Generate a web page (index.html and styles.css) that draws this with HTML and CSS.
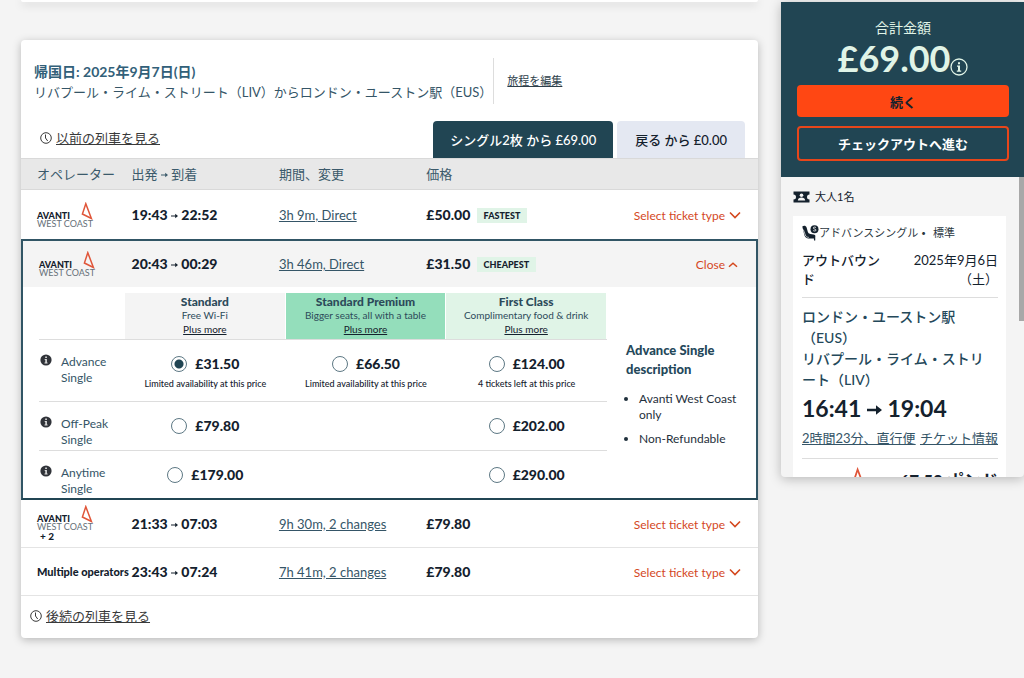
FILE: index.html
```html
<!DOCTYPE html>
<html lang="ja">
<head>
  <meta charset="UTF-8">
  <meta name="viewport" content="width=device-width, initial-scale=1.0">
  <title>列車を選択</title>
  <link rel="stylesheet" href="styles.css">
</head>
<body>

  <!-- shared icons -->
  <svg class="sprite" aria-hidden="true">
    <symbol id="arrow" viewBox="0 0 10 8">
      <path d="M0 3.2h6V.8L10 4 6 7.2V4.8H0z" fill="currentColor"/>
    </symbol>
    <symbol id="clock" viewBox="0 0 12 12">
      <circle cx="6" cy="6" r="5.3" fill="none" stroke="currentColor"/>
      <path d="M5.5 2.5V6l2.2 3" fill="none" stroke="currentColor"/>
    </symbol>
    <symbol id="chevron" viewBox="0 0 12 8">
      <path d="M1 1.5l5 5 5-5" fill="none" stroke="currentColor" stroke-width="1.6"/>
    </symbol>
    <symbol id="chevron-up" viewBox="0 0 12 8">
      <path d="M2 5.8l4-3.6 4 3.6" fill="none" stroke="currentColor" stroke-width="1.5"/>
    </symbol>
    <symbol id="info" viewBox="0 0 12 12">
      <circle cx="6" cy="6" r="5.6" fill="#303339"/>
      <path d="M5.2 2.5h1.7v1.6H5.2zM4.7 5h2.2v3.4h.7v1H4.5v-1h.8V6h-.6z" fill="#ddd"/>
    </symbol>
    <symbol id="avanti" viewBox="0 0 12 18">
      <path d="M4.8 1.700L1.400 12l9 4.500z" fill="none" stroke="#e0563a" stroke-width="1.500"/>
    </symbol>
  </svg>

  <div class="page">
    <main class="results">
      <section class="card card-previous"></section>

      <section class="card">
        <header class="journey">
          <div class="journey-text">
            <h2>帰国日: 2025年9月7日(日)</h2>
            <p>リバプール・ライム・ストリート（LIV）からロンドン・ユーストン駅（EUS）</p>
          </div>
          <a class="edit-link" href="#">旅程を編集</a>
        </header>

        <div class="toolbar">
          <a class="time-link" href="#"><svg class="clock"><use href="#clock"/></svg><span>以前の列車を見る</span></a>
          <div class="tabs">
            <button class="tab tab-active" type="button">シングル2枚 から £69.00</button>
            <button class="tab" type="button">戻る から £0.00</button>
          </div>
        </div>

        <table class="trains">
          <colgroup>
            <col class="col-operator">
            <col class="col-time">
            <col class="col-duration">
            <col class="col-price">
            <col class="col-action">
          </colgroup>
          <thead>
            <tr>
              <th>オペレーター</th>
              <th>出発 <svg class="arrow"><use href="#arrow"/></svg> 到着</th>
              <th>期間、変更</th>
              <th>価格</th>
              <th></th>
            </tr>
          </thead>
          <tbody class="fastest">
            <tr>
              <td>
                <div class="operator"><span class="operator-name">AVANTI</span><svg class="operator-mark"><use href="#avanti"/></svg><span class="operator-sub">WEST COAST</span></div>
              </td>
              <td class="time">19:43 <svg class="arrow"><use href="#arrow"/></svg> 22:52</td>
              <td><a class="duration" href="#">3h 9m, Direct</a></td>
              <td class="price">£50.00 <span class="badge">FASTEST</span></td>
              <td class="action"><button class="toggle" type="button">Select ticket type<svg class="chevron"><use href="#chevron"/></svg></button></td>
            </tr>
          </tbody>
          <tbody class="expanded">
            <tr class="expanded-head">
              <td>
                <div class="operator"><span class="operator-name">AVANTI</span><svg class="operator-mark"><use href="#avanti"/></svg><span class="operator-sub">WEST COAST</span></div>
              </td>
              <td class="time">20:43 <svg class="arrow"><use href="#arrow"/></svg> 00:29</td>
              <td><a class="duration" href="#">3h 46m, Direct</a></td>
              <td class="price">£31.50 <span class="badge">CHEAPEST</span></td>
              <td class="action"><button class="toggle" type="button">Close<svg class="chevron chevron-small"><use href="#chevron-up"/></svg></button></td>
            </tr>
            <tr class="expanded-body">
              <td colspan="5">
                <div class="fare-panel">
                  <table class="fares">
                    <colgroup>
                      <col class="col-ticket">
                      <col>
                      <col>
                      <col>
                    </colgroup>
                    <thead>
                      <tr>
                        <td></td>
                        <th><div class="class-box">
                          <strong>Standard</strong>
                          <span>Free Wi-Fi</span>
                          <a href="#">Plus more</a>
                        </div></th>
                        <th><div class="class-box class-premium">
                          <strong>Standard Premium</strong>
                          <span>Bigger seats, all with a table</span>
                          <a href="#">Plus more</a>
                        </div></th>
                        <th><div class="class-box class-first">
                          <strong>First Class</strong>
                          <span>Complimentary food &amp; drink</span>
                          <a href="#">Plus more</a>
                        </div></th>
                      </tr>
                    </thead>
                    <tbody>
                      <tr class="fare-tall">
                        <th><div class="ticket"><svg class="info"><use href="#info"/></svg><span>Advance Single</span></div></th>
                        <td>
                          <label class="fare"><input type="radio" name="fare" checked>£31.50</label>
                          <small>Limited availability at this price</small>
                        </td>
                        <td>
                          <label class="fare"><input type="radio" name="fare">£66.50</label>
                          <small>Limited availability at this price</small>
                        </td>
                        <td>
                          <label class="fare"><input type="radio" name="fare">£124.00</label>
                          <small>4 tickets left at this price</small>
                        </td>
                      </tr>
                      <tr>
                        <th><div class="ticket"><svg class="info"><use href="#info"/></svg><span>Off-Peak Single</span></div></th>
                        <td><label class="fare"><input type="radio" name="fare">£79.80</label></td>
                        <td></td>
                        <td><label class="fare"><input type="radio" name="fare">£202.00</label></td>
                      </tr>
                      <tr>
                        <th><div class="ticket"><svg class="info"><use href="#info"/></svg><span>Anytime Single</span></div></th>
                        <td><label class="fare"><input type="radio" name="fare">£179.00</label></td>
                        <td></td>
                        <td><label class="fare"><input type="radio" name="fare">£290.00</label></td>
                      </tr>
                    </tbody>
                  </table>
                  <aside class="description">
                    <h3>Advance Single description</h3>
                    <ul>
                      <li>Avanti West Coast only</li>
                      <li>Non-Refundable</li>
                    </ul>
                  </aside>
                </div>
              </td>
            </tr>
          </tbody>
          <tbody>
            <tr>
              <td>
                <div class="operator"><span class="operator-name">AVANTI</span><svg class="operator-mark"><use href="#avanti"/></svg><span class="operator-sub">WEST COAST</span><span class="operator-more">+ 2</span></div>
              </td>
              <td class="time">21:33 <svg class="arrow"><use href="#arrow"/></svg> 07:03</td>
              <td><a class="duration" href="#">9h 30m, 2 changes</a></td>
              <td class="price">£79.80</td>
              <td class="action"><button class="toggle" type="button">Select ticket type<svg class="chevron"><use href="#chevron"/></svg></button></td>
            </tr>
            <tr>
              <td class="multiple">Multiple operators</td>
              <td class="time">23:43 <svg class="arrow"><use href="#arrow"/></svg> 07:24</td>
              <td><a class="duration" href="#">7h 41m, 2 changes</a></td>
              <td class="price">£79.80</td>
              <td class="action"><button class="toggle" type="button">Select ticket type<svg class="chevron"><use href="#chevron"/></svg></button></td>
            </tr>
          </tbody>
        </table>

        <footer class="later">
          <a class="time-link" href="#"><svg class="clock"><use href="#clock"/></svg><span>後続の列車を見る</span></a>
        </footer>
      </section>
    </main>

    <aside class="basket">
      <div class="total">
        <p class="total-label">合計金額</p>
        <p class="total-price">£69.00<svg class="total-info" viewBox="0 0 18 18"><circle cx="9" cy="9" r="8" fill="none" stroke="currentColor" stroke-width="1.3"/><path d="M8 4.2h2v2H8zM7 7.500h3v5h1.200v1.200H6.800v-1.200H8V8.700H7z" fill="currentColor"/></svg></p>
        <button class="btn btn-primary" type="button">続く</button>
        <button class="btn btn-outline" type="button">チェックアウトへ進む</button>
      </div>

      <div class="basket-body">
        <p class="passengers"><svg class="passenger-icon" viewBox="0 0 17 12"><path d="M.5.5h16v3a2.500 2.500 0 0 0 0 5v3H.5v-3a2.500 2.500 0 0 0 0-5z" fill="#14212d"/><circle cx="8.500" cy="4.200" r="1.800" fill="#f4f4f4"/><path d="M4.800 9.500c.3-2.200 1.700-3 3.700-3s3.400.8 3.700 3z" fill="#f4f4f4"/></svg>大人1名</p>

        <div class="ticket-card">
          <p class="fare-name"><svg class="seat-icon" viewBox="0 0 17 16"><path d="M.3 1.500C2 .2 4 .8 4.600 2.500l1.200 4.300c.4 1.300 1 1.900 2.400 2.100l3.300.5c1.500.2 2 1 1.600 2.200L12 13.500H7.500C4 13.500 3 12 2.200 9.500z" fill="#14212d"/><path d="M1.300 4.500l2 5.500c.7 1.800 1.800 2.300 3.500 2.400" fill="none" stroke="#fff" stroke-width=".7"/><path d="M12.600 10.500v5" stroke="#14212d" stroke-width="1.300"/><circle cx="12.500" cy="4.200" r="4" fill="#14212d"/><path d="M14 2.500c-1.300-.8-2.700-.5-2.700.5 0 1.300 2.700.8 2.700 2.100 0 1-1.500 1.200-2.800.5" fill="none" stroke="#fff" stroke-width=".8"/></svg>アドバンスシングル<span class="dot">•</span>標準</p>
          <div class="leg-head">
            <span class="leg-name">アウトバウンド</span>
            <span class="leg-date">2025年9月6日<br>（土）</span>
          </div>
          <p class="stations">ロンドン・ユーストン駅（EUS）<br>リバプール・ライム・ストリート（LIV）</p>
          <p class="leg-time">16:41 <svg class="arrow-large"><use href="#arrow"/></svg> 19:04</p>
          <p class="leg-links"><a href="#">2時間23分、直行便</a><a href="#">チケット情報</a></p>
          <div class="leg-price">
            <svg class="leg-mark"><use href="#avanti"/></svg>
            <strong>67.50 ポンド</strong>
          </div>
        </div>
        <span class="scroll-thumb"></span>
      </div>
    </aside>
  </div>

</body>
</html>
```

FILE: styles.css
```css
* {
  box-sizing: border-box;
}

body {
  margin: 0;
  background-color: #f4f4f4;
  color: #14212d;
  font-family: Lato, "Noto Sans CJK JP", sans-serif;
  font-size: 13px;
  line-height: 20px;
}

h2, h3, p, ul {
  margin: 0;
}

a {
  color: inherit;
}

button {
  font-family: inherit;
  cursor: pointer;
}

.sprite {
  display: none;
}

.page {
  display: flex;
  align-items: flex-start;
  gap: 23px;
  padding: 0 0 40px 21px;
}

.results {
  flex: 1;
  min-width: 0;
}

.card {
  background-color: #fff;
  border-radius: 4px;
  box-shadow: 0 2px 9px rgba(0, 0, 0, 0.25);
}

.card-previous {
  height: 2px;
  margin-bottom: 38px;
  border-radius: 0 0 4px 4px;
}

/* Journey header */
.journey {
  display: flex;
  align-items: center;
  padding: 18px 13px 17px;
}

.journey-text {
  padding: 4px 1px 2px 0;
  border-right: 1px solid #ddd;
  color: #355567;
}

.journey h2 {
  color: #326079;
  font-size: 14px;
  line-height: 20px;
  font-weight: 700;
}

.edit-link {
  margin-left: 13px;
  color: #2c3e4a;
  font-size: 11px;
}

.toolbar {
  display: flex;
  justify-content: space-between;
  align-items: flex-end;
  padding: 0 13px 0 19px;
}

.toolbar .time-link {
  padding-bottom: 10px;
}

.time-link {
  display: inline-flex;
  align-items: center;
  gap: 4px;
  color: #3a3a3a;
  text-decoration: none;
}

.time-link span {
  text-decoration: underline;
}

.clock {
  width: 12px;
  height: 12px;
}

.tabs {
  display: flex;
  gap: 4px;
}

.tab {
  height: 37px;
  padding: 0 18px;
  border: none;
  border-radius: 4px 4px 0 0;
  background-color: #e4e8f2;
  color: #14212d;
  font-size: 13px;
  font-weight: 500;
}

.tab-active {
  padding: 0 17px;
  background-color: #214553;
  color: #fff;
}

/* Train list */
.trains,
.fares {
  width: 100%;
  table-layout: fixed;
  border-spacing: 0;
}

.col-operator {
  width: 15%;
}

.col-time,
.col-duration {
  width: 20%;
}

.col-price {
  width: 18%;
}

.trains td,
.trains th {
  padding: 0;
  text-align: left;
}

.trains > thead th {
  height: 32px;
  border-top: 1px solid #d9d9d9;
  border-bottom: 1px solid #d9d9d9;
  background-color: #e8e8e8;
  color: #3b5a6b;
  font-weight: 400;
}

.trains > thead th:first-child,
.trains > tbody > tr > td:first-child {
  padding-left: 16px;
}

.trains > tbody > tr > td {
  height: 48px;
  border-bottom: 1px solid #e4e4e4;
}

.trains > .fastest > tr > td {
  height: 49px;
  border-bottom: none;
}

.operator {
  display: grid;
  grid-template-columns: 44px 12px;
  align-items: end;
  justify-content: start;
  color: #14212d;
}

.operator-name {
  font-size: 9px;
  line-height: 9px;
  font-weight: 900;
}

.operator-mark {
  width: 12px;
  height: 18px;
}

.operator-sub {
  grid-column: span 2;
  color: #667079;
  font-size: 9px;
  line-height: 8px;
  white-space: nowrap;
}

.operator-more {
  padding-left: 3px;
  font-size: 10px;
  line-height: 11px;
  font-weight: 900;
}

.multiple {
  font-size: 11px;
  font-weight: 900;
  white-space: nowrap;
}

.time,
.price,
.fare {
  font-size: 14px;
  font-weight: 900;
  white-space: nowrap;
}

.arrow {
  width: 7px;
  height: 6px;
  vertical-align: 1px;
}

.duration {
  color: #355567;
}

.badge {
  display: inline-block;
  margin-left: 3px;
  padding: 0 7px;
  background-color: #e0f4e7;
  font-size: 9px;
  line-height: 15px;
  vertical-align: 1px;
}

.trains .action {
  padding-right: 17px;
  text-align: right;
}

.toggle {
  display: inline-flex;
  align-items: center;
  gap: 4px;
  padding: 0;
  border: none;
  background: none;
  color: #d4481e;
  font-size: 12px;
}

.chevron {
  width: 12px;
  height: 8px;
}

.chevron-small {
  margin-left: -2px;
}

/* Opened train */
.trains > .expanded > tr > td {
  border-bottom: none;
}

.trains > .expanded > tr > td:first-child {
  border-left: 2px solid #315565;
}

.trains > .expanded > tr > td:last-child {
  border-right: 2px solid #315565;
}

.trains > .expanded > .expanded-head > td {
  border-top: 2px solid #315565;
  background-color: #f4f4f4;
}

.trains > .expanded > .expanded-body > td {
  padding: 6px 16px 0;
  border-bottom: 2px solid #214553;
}

.fare-panel {
  display: flex;
  gap: 19px;
}

.fares {
  flex: 1;
}

.description {
  flex: 0 0 114px;
  padding-top: 48px;
}

.col-ticket {
  width: 86px;
}

.fares th,
.fares td {
  border-bottom: 1px solid #ddd;
}

.fares tbody tr:last-child > * {
  border-bottom: none;
}

.fares thead th {
  font-weight: 400;
}

.class-box {
  display: flex;
  flex-direction: column;
  height: 46px;
  margin-right: 1px;
  padding-top: 2px;
  background-color: #f4f4f4;
  color: #2c4a5a;
  font-size: 10px;
  line-height: 13px;
  text-align: center;
}

.class-box strong {
  font-size: 12px;
  line-height: 14px;
  font-weight: 900;
}

.class-box a {
  padding-top: 1px;
  color: #14212d;
}

.class-premium {
  background-color: #94debb;
}

.class-first {
  background-color: #e0f4e7;
}

.fares tbody th,
.fares tbody td {
  height: 49px;
  vertical-align: top;
}

.fares .fare-tall > * {
  height: 62px;
}

.fares tbody tr:last-child > * {
  height: 47px;
}

.fares tbody td {
  padding-top: 15px;
  text-align: center;
}

.ticket {
  display: flex;
  align-items: flex-start;
  gap: 9px;
  padding: 14px 12px 0 1px;
  color: #355567;
  font-size: 12px;
  line-height: 16px;
  font-weight: 400;
}

.info {
  flex: none;
  width: 12px;
  height: 12px;
}

.fare {
  display: inline-flex;
  align-items: center;
  gap: 8px;
  line-height: 18px;
}

.fare input {
  appearance: none;
  width: 16px;
  height: 16px;
  margin: 0;
  border: 1px solid #5d7884;
  border-radius: 50%;
  background-color: #fff;
}

.fare input:checked {
  background: radial-gradient(circle, #214553 4px, #fff 5px);
}

.fares small {
  display: block;
  font-size: 9px;
  line-height: 14px;
  font-weight: 500;
}

.description h3 {
  color: #24485a;
  font-size: 13px;
  line-height: 19px;
  font-weight: 900;
}

.description ul {
  margin-top: 12px;
  padding-left: 13px;
  color: #1f303c;
  font-size: 12px;
  line-height: 16px;
}

.description li {
  margin-bottom: 8px;
}

.later {
  padding: 10px 9px 11px;
}

/* Basket */
.basket {
  display: flex;
  flex-direction: column;
  flex: 0 0 243px;
  max-height: 70vh;
  margin-top: 2px;
  border-radius: 0 0 4px 4px;
  box-shadow: 0 2px 12px rgba(0, 0, 0, 0.25);
  overflow: hidden;
}

.total {
  flex: none;
  padding: 16px 15px 16px 16px;
  background-color: #214553;
  color: #e0f4e7;
  text-align: center;
}

.total-label {
  font-size: 14px;
}

.total-price {
  display: flex;
  justify-content: center;
  align-items: flex-end;
  padding-bottom: 7px;
  font-size: 36px;
  line-height: 40px;
  font-weight: 700;
}

.total-info {
  width: 18px;
  height: 18px;
  margin-bottom: 2px;
}

.btn {
  display: block;
  width: 100%;
  border-radius: 4px;
  font-size: 13px;
  font-weight: 700;
}

.btn-primary {
  height: 32px;
  border: none;
  background-color: #ff4713;
  color: #14212d;
}

.btn-outline {
  height: 35px;
  margin-top: 9px;
  border: 2px solid #e8461a;
  background: none;
  color: #fff;
}

.basket-body {
  position: relative;
  flex: 1;
  min-height: 0;
  padding: 10px 18px 0 12px;
  overflow: hidden;
}

.passengers {
  display: flex;
  align-items: center;
  gap: 5px;
  font-size: 11px;
}

.passenger-icon {
  width: 17px;
  height: 12px;
}

.ticket-card {
  margin-top: 9px;
  padding: 7px 8px 0 9px;
  background-color: #fff;
}

.fare-name {
  display: flex;
  align-items: center;
  font-size: 11px;
  color: #2a3640;
}

.dot {
  padding: 0 7px 0 3px;
  font-size: 8px;
}

.seat-icon {
  width: 17px;
  height: 16px;
}

.leg-head {
  display: flex;
  justify-content: space-between;
  padding: 8px 0;
  border-bottom: 1px solid #ddd;
  line-height: 19px;
}

.leg-name {
  width: 80px;
  font-weight: 500;
}

.leg-date {
  text-align: right;
}

.stations {
  padding: 8px 8px 0 0;
  color: #24485a;
  font-size: 14px;
  line-height: 21px;
  font-weight: 500;
}

.leg-time {
  padding-top: 3px;
  font-size: 23px;
  line-height: 30px;
  font-weight: 700;
}

.arrow-large {
  width: 15px;
  height: 12px;
  vertical-align: 1px;
}

.leg-links {
  display: flex;
  justify-content: space-between;
  padding: 5px 0 10px;
  border-bottom: 1px solid #ddd;
  color: #355567;
}

.leg-price {
  display: flex;
  justify-content: space-between;
  align-items: flex-start;
  padding: 8px 0 80px 50px;
  font-size: 17px;
}

.leg-price strong {
  padding-top: 4px;
}

.leg-mark {
  width: 14px;
  height: 22px;
}

.scroll-thumb {
  position: absolute;
  top: 0;
  right: 0;
  width: 5px;
  height: 48%;
  background-color: #a8a8a8;
}
```
